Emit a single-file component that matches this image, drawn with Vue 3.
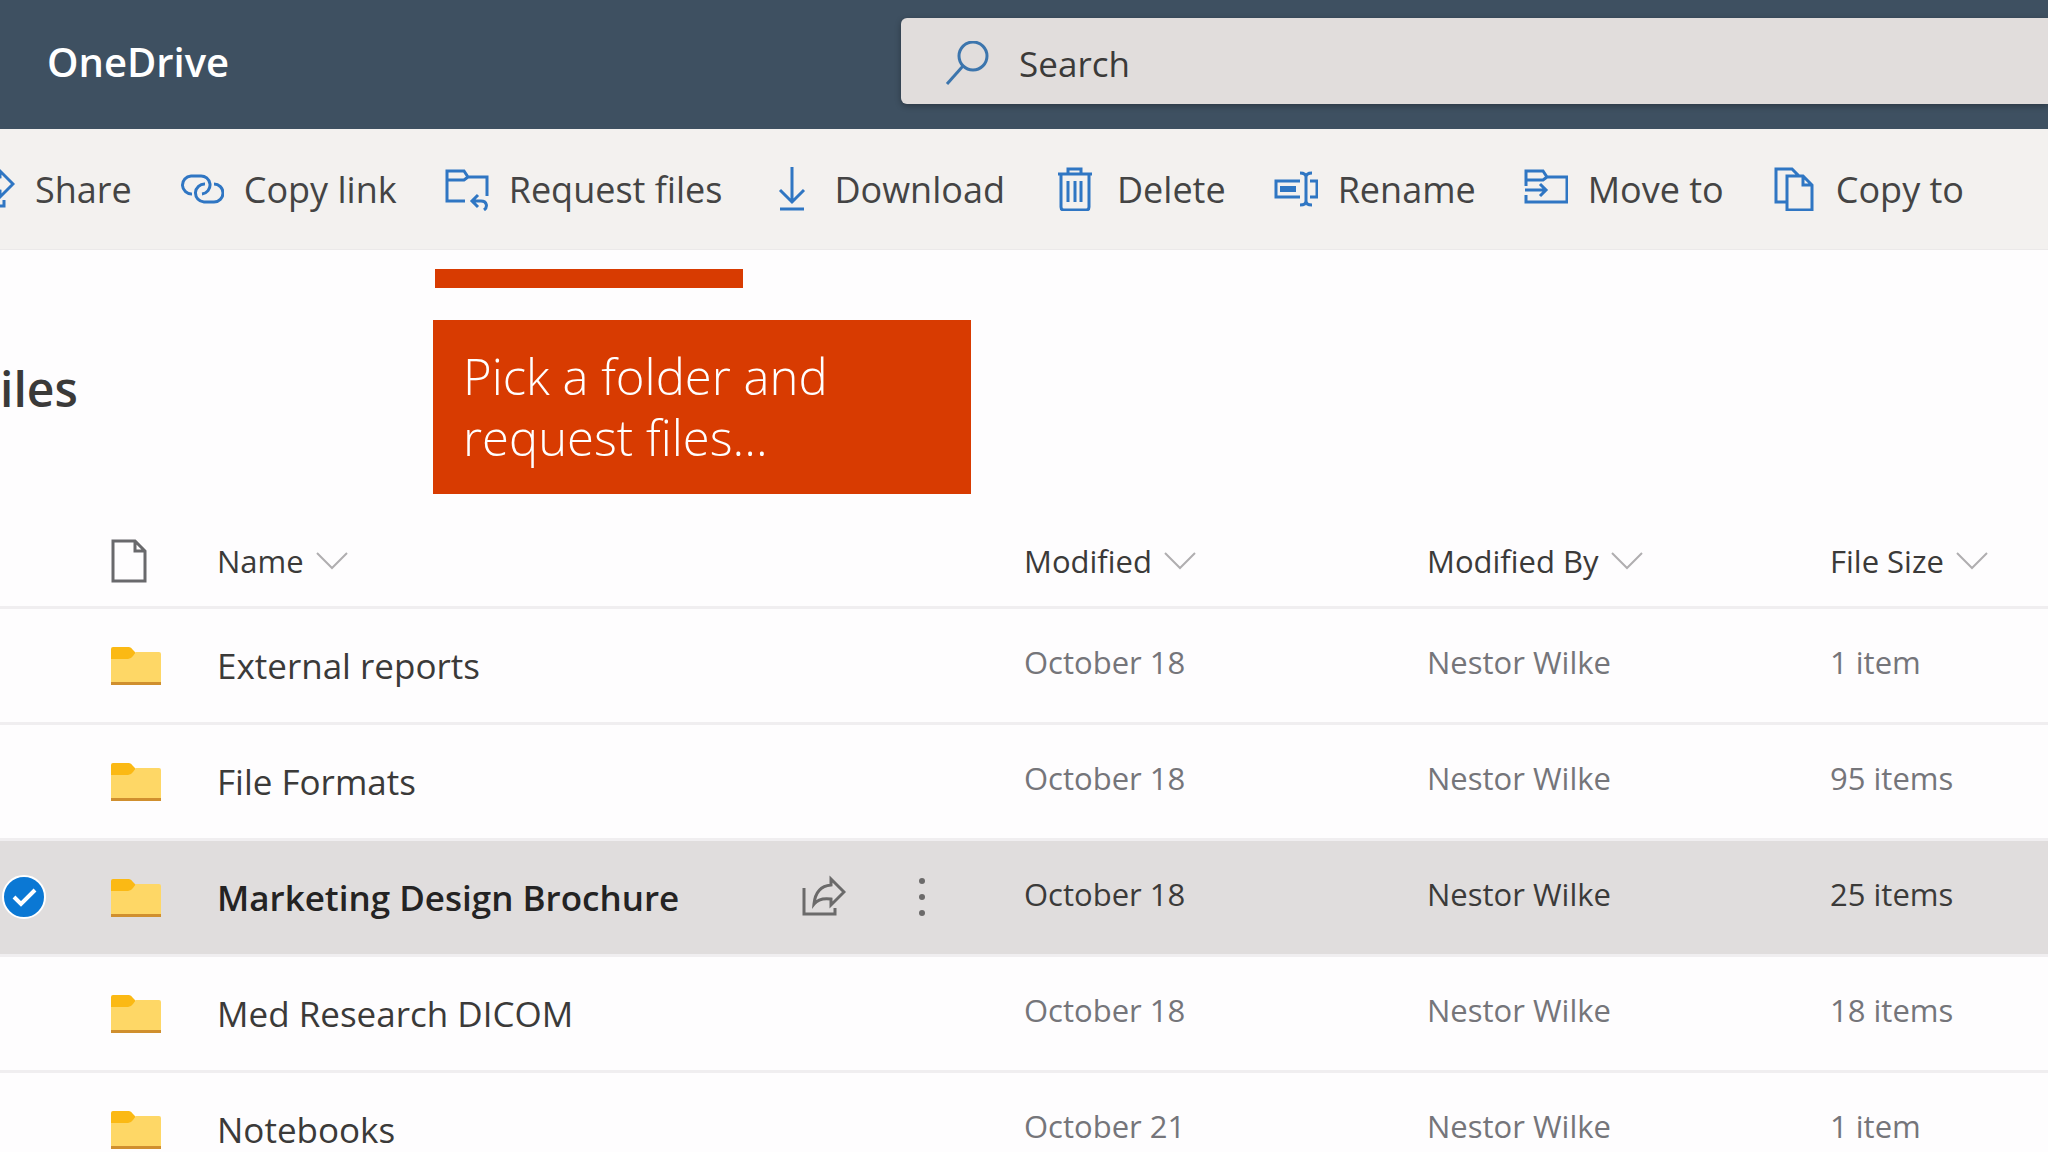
<script setup>
import { ref } from 'vue'

const search = ref('')

const commands = [
  { id: 'share', label: 'Share' },
  { id: 'link', label: 'Copy link' },
  { id: 'request', label: 'Request files' },
  { id: 'download', label: 'Download' },
  { id: 'delete', label: 'Delete' },
  { id: 'rename', label: 'Rename' },
  { id: 'move', label: 'Move to' },
  { id: 'copy', label: 'Copy to' },
]

const icons = {
  share: 'M2 13V39H33V33M42 17L29 4V10C18 11 13 19 12 29C16 24 22 23 29 24V30Z',
  link: 'M12 27A9 9 0 0 1 11 9H20A9 9 0 0 1 22 27M25 17A9 9 0 0 0 24 35H34A9 9 0 0 0 34 17',
  request: 'M20 34H2V4H19L23 10H42V29M2 13H19L23 10M33 28L27 34L33 40M27 34H36C42 34 43 40 39 43',
  download: 'M22 0V35M10 23L22 35L34 23M10 42H34',
  delete: 'M5 7H39M15 7V2H28V7M8 7V40Q8 43 11 43H33Q36 43 36 40V7M15 14V35M22 14V35M28 14V35',
  rename: 'M26 14H2V30H26M36 14H43V30H36M32 9V35M26 6Q32 6 32 10Q32 6 38 6M26 38Q32 38 32 34Q32 38 38 38',
  move: 'M2 19V4H19L23 10H43V35H2V28M2 13H19L23 10M1 23H22M16 17L22 23L16 29',
  copy: 'M14 35H4V2H20L27 9M15 9H31L40 18V43H15ZM31 9V18H40',
}

const columns = [
  { id: 'name', label: 'Name' },
  { id: 'modified', label: 'Modified' },
  { id: 'by', label: 'Modified By' },
  { id: 'size', label: 'File Size' },
]

const files = ref([
  { name: 'External reports', modified: 'October 18', by: 'Nestor Wilke', size: '1 item', selected: false },
  { name: 'File Formats', modified: 'October 18', by: 'Nestor Wilke', size: '95 items', selected: false },
  { name: 'Marketing Design Brochure', modified: 'October 18', by: 'Nestor Wilke', size: '25 items', selected: true },
  { name: 'Med Research DICOM', modified: 'October 18', by: 'Nestor Wilke', size: '18 items', selected: false },
  { name: 'Notebooks', modified: 'October 21', by: 'Nestor Wilke', size: '1 item', selected: false },
])
</script>

<template>
  <div class="page">
    <header class="topbar">
      <a href="#" class="brand">OneDrive</a>
      <label class="search">
        <svg class="icon" viewBox="0 0 44 44" aria-hidden="true">
          <circle cx="28" cy="15" r="14" />
          <path d="M18 25L2 43" />
        </svg>
        <input v-model="search" type="search" placeholder="Search" aria-label="Search" />
      </label>
    </header>

    <nav class="toolbar">
      <button v-for="cmd in commands" :key="cmd.id" type="button" class="command">
        <svg class="icon" viewBox="0 0 44 44" aria-hidden="true">
          <path :d="icons[cmd.id]" />
          <rect v-if="cmd.id === 'rename'" class="solid" x="6" y="19" width="16" height="6" />
        </svg>
        <span>{{ cmd.label }}</span>
      </button>
    </nav>

    <main class="content">
      <h1>iles</h1>

      <div class="marker"></div>
      <p class="callout">Pick a folder and request files...</p>

      <table>
        <colgroup>
          <col class="col-check" />
          <col class="col-icon" />
          <col />
          <col class="col-meta" />
          <col class="col-meta" />
          <col class="col-size" />
        </colgroup>
        <thead>
          <tr>
            <th></th>
            <th>
              <svg class="file-icon" viewBox="0 0 36 44" aria-hidden="true">
                <path d="M2 2H24L34 12V42H2ZM24 2V12H34" />
              </svg>
            </th>
            <th v-for="col in columns" :key="col.id">
              <button type="button" class="sort">
                {{ col.label }}
                <svg class="chevron" viewBox="0 0 32 18" aria-hidden="true">
                  <path d="M1 1L16 16L31 1" />
                </svg>
              </button>
            </th>
          </tr>
        </thead>
        <tbody>
          <tr v-for="file in files" :key="file.name" :class="{ selected: file.selected }">
            <td>
              <label class="check">
                <input v-model="file.selected" type="checkbox" :aria-label="file.name" />
                <svg viewBox="0 0 44 44" aria-hidden="true">
                  <circle cx="22" cy="22" r="21" />
                  <path d="M12 22L19 29L33 15" />
                </svg>
              </label>
            </td>
            <td>
              <svg class="folder" viewBox="0 0 50 40" aria-hidden="true">
                <path fill="#fbb914" d="M0 3Q0 1 2 1H18Q20 1 22 4L25 7L20 14H0Z" />
                <path fill="#fed766" d="M0 13H17Q20 13 22 10L25 6H48Q50 6 50 8V37H0Z" />
                <path fill="#d08f2e" d="M0 36H50V39H0Z" />
              </svg>
            </td>
            <td>
              <div class="name-cell">
                <a href="#" class="name">{{ file.name }}</a>
                <div v-if="file.selected" class="actions">
                  <button type="button" aria-label="Share">
                    <svg class="icon" viewBox="0 0 44 44"><path :d="icons.share" /></svg>
                  </button>
                  <button type="button" aria-label="More actions">
                    <svg class="icon solid" viewBox="0 0 44 44">
                      <circle cx="22" cy="6" r="3" />
                      <circle cx="22" cy="22" r="3" />
                      <circle cx="22" cy="38" r="3" />
                    </svg>
                  </button>
                </div>
              </div>
            </td>
            <td class="meta">{{ file.modified }}</td>
            <td class="meta">{{ file.by }}</td>
            <td class="meta">{{ file.size }}</td>
          </tr>
        </tbody>
      </table>
    </main>
  </div>
</template>

<style>
body {
  margin: 0;
}
</style>

<style scoped>
.page {
  height: 100vh;
  overflow: hidden;
  background: #fefdfe;
  color: #3b3a39;
  font-family: 'Open Sans', 'Noto Sans', sans-serif;
}

button {
  padding: 0;
  border: none;
  background: none;
  color: inherit;
  font: inherit;
  cursor: pointer;
}

.icon {
  flex: none;
  display: block;
  width: 44px;
  height: 44px;
  fill: none;
  stroke: #2f76c3;
  stroke-width: 3;
}

.solid {
  fill: #2f76c3;
  stroke: none;
}

/* top bar */
.topbar {
  display: grid;
  grid-template-columns: 44% 56%;
  align-items: start;
  height: 129px;
  background: #3e5061;
}

.brand {
  padding-left: 47px;
  color: #fff;
  font-size: 40px;
  font-weight: 600;
  line-height: 124px;
  text-decoration: none;
}

.search {
  display: flex;
  align-items: center;
  gap: 30px;
  height: 86px;
  margin-top: 18px;
  padding: 4px 0 0 44px;
  box-sizing: border-box;
  border-radius: 6px 0 0 6px;
  background: #e1dddc;
  box-shadow: 0 2px 6px rgba(0, 0, 0, 0.3);
}

.search .icon {
  stroke: #3c75ad;
}

.search input {
  flex: 1;
  min-width: 0;
  padding: 0;
  border: none;
  outline: none;
  background: none;
  color: #3b3a39;
  font: inherit;
  font-size: 35px;
}

.search input::placeholder {
  color: #3b3a39;
  opacity: 1;
}

/* command bar */
.toolbar {
  display: flex;
  gap: 48px;
  height: 121px;
  margin-left: -29px;
  background: #f3f1ef;
  border-bottom: 1px solid #ebe9e9;
  box-sizing: border-box;
}

.command {
  display: flex;
  align-items: center;
  gap: 20px;
  color: #444;
  font-size: 36px;
  white-space: nowrap;
}

/* content */
.content {
  position: relative;
}

h1 {
  margin: 0;
  padding: 101px 0 71px;
  font-size: 48px;
  font-weight: 600;
  line-height: 76px;
}

.marker {
  position: absolute;
  top: 19px;
  left: 435px;
  width: 308px;
  height: 19px;
  background: #d83b01;
}

.callout {
  position: absolute;
  top: 70px;
  left: 433px;
  width: 538px;
  margin: 0;
  padding: 26px 120px 26px 30px;
  box-sizing: border-box;
  background: #d83b01;
  color: #fff;
  font-size: 49px;
  font-weight: 300;
  line-height: 61px;
}

/* file list */
table {
  width: 100%;
  border-collapse: collapse;
  table-layout: fixed;
}

.col-check {
  width: 111px;
}

.col-icon {
  width: 106px;
}

.col-meta {
  width: 403px;
}

.col-size {
  width: 218px;
}

th,
td {
  height: 116px;
  padding: 0;
  box-sizing: border-box;
  border-bottom: 3px solid #f0eef0;
  text-align: left;
  vertical-align: middle;
}

th {
  height: 109px;
  padding-top: 18px;
  font-size: 31px;
  font-weight: 400;
  white-space: nowrap;
}

.file-icon {
  display: block;
  width: 36px;
  height: 44px;
  fill: none;
  stroke: #69696c;
  stroke-width: 3;
}

.sort {
  display: flex;
  align-items: center;
  gap: 12px;
}

.chevron {
  width: 32px;
  height: 18px;
  fill: none;
  stroke: #b0aeb0;
  stroke-width: 2;
}

.folder {
  display: block;
  width: 50px;
  height: 40px;
  padding-top: 2px;
}

.name-cell {
  display: flex;
  align-items: center;
  justify-content: space-between;
}

.name {
  padding-top: 2px;
  color: inherit;
  font-size: 35px;
  line-height: 44px;
  text-decoration: none;
  white-space: nowrap;
}

.meta {
  padding-bottom: 6px;
  color: #75757a;
  font-size: 31px;
}

.actions {
  display: flex;
  gap: 54px;
  margin-right: 80px;
}

.actions .icon {
  stroke: #6b6a6a;
}

.actions .icon.solid {
  fill: #6b6a6a;
  stroke: none;
}

.selected td {
  background: #e0dddd;
}

.selected .name {
  color: #242323;
  font-weight: 600;
}

.selected .meta {
  color: #3b3a39;
}

.check {
  display: block;
  position: relative;
  width: 44px;
  height: 44px;
  margin-left: 2px;
}

.check input {
  position: absolute;
  inset: 0;
  width: 100%;
  height: 100%;
  margin: 0;
  opacity: 0;
}

.check svg {
  display: block;
  fill: #0b78d4;
  stroke: #fff;
  stroke-width: 2;
  opacity: 0;
}

.check path {
  fill: none;
  stroke-width: 4;
}

.check input:checked + svg,
.check:hover svg {
  opacity: 1;
}
</style>
